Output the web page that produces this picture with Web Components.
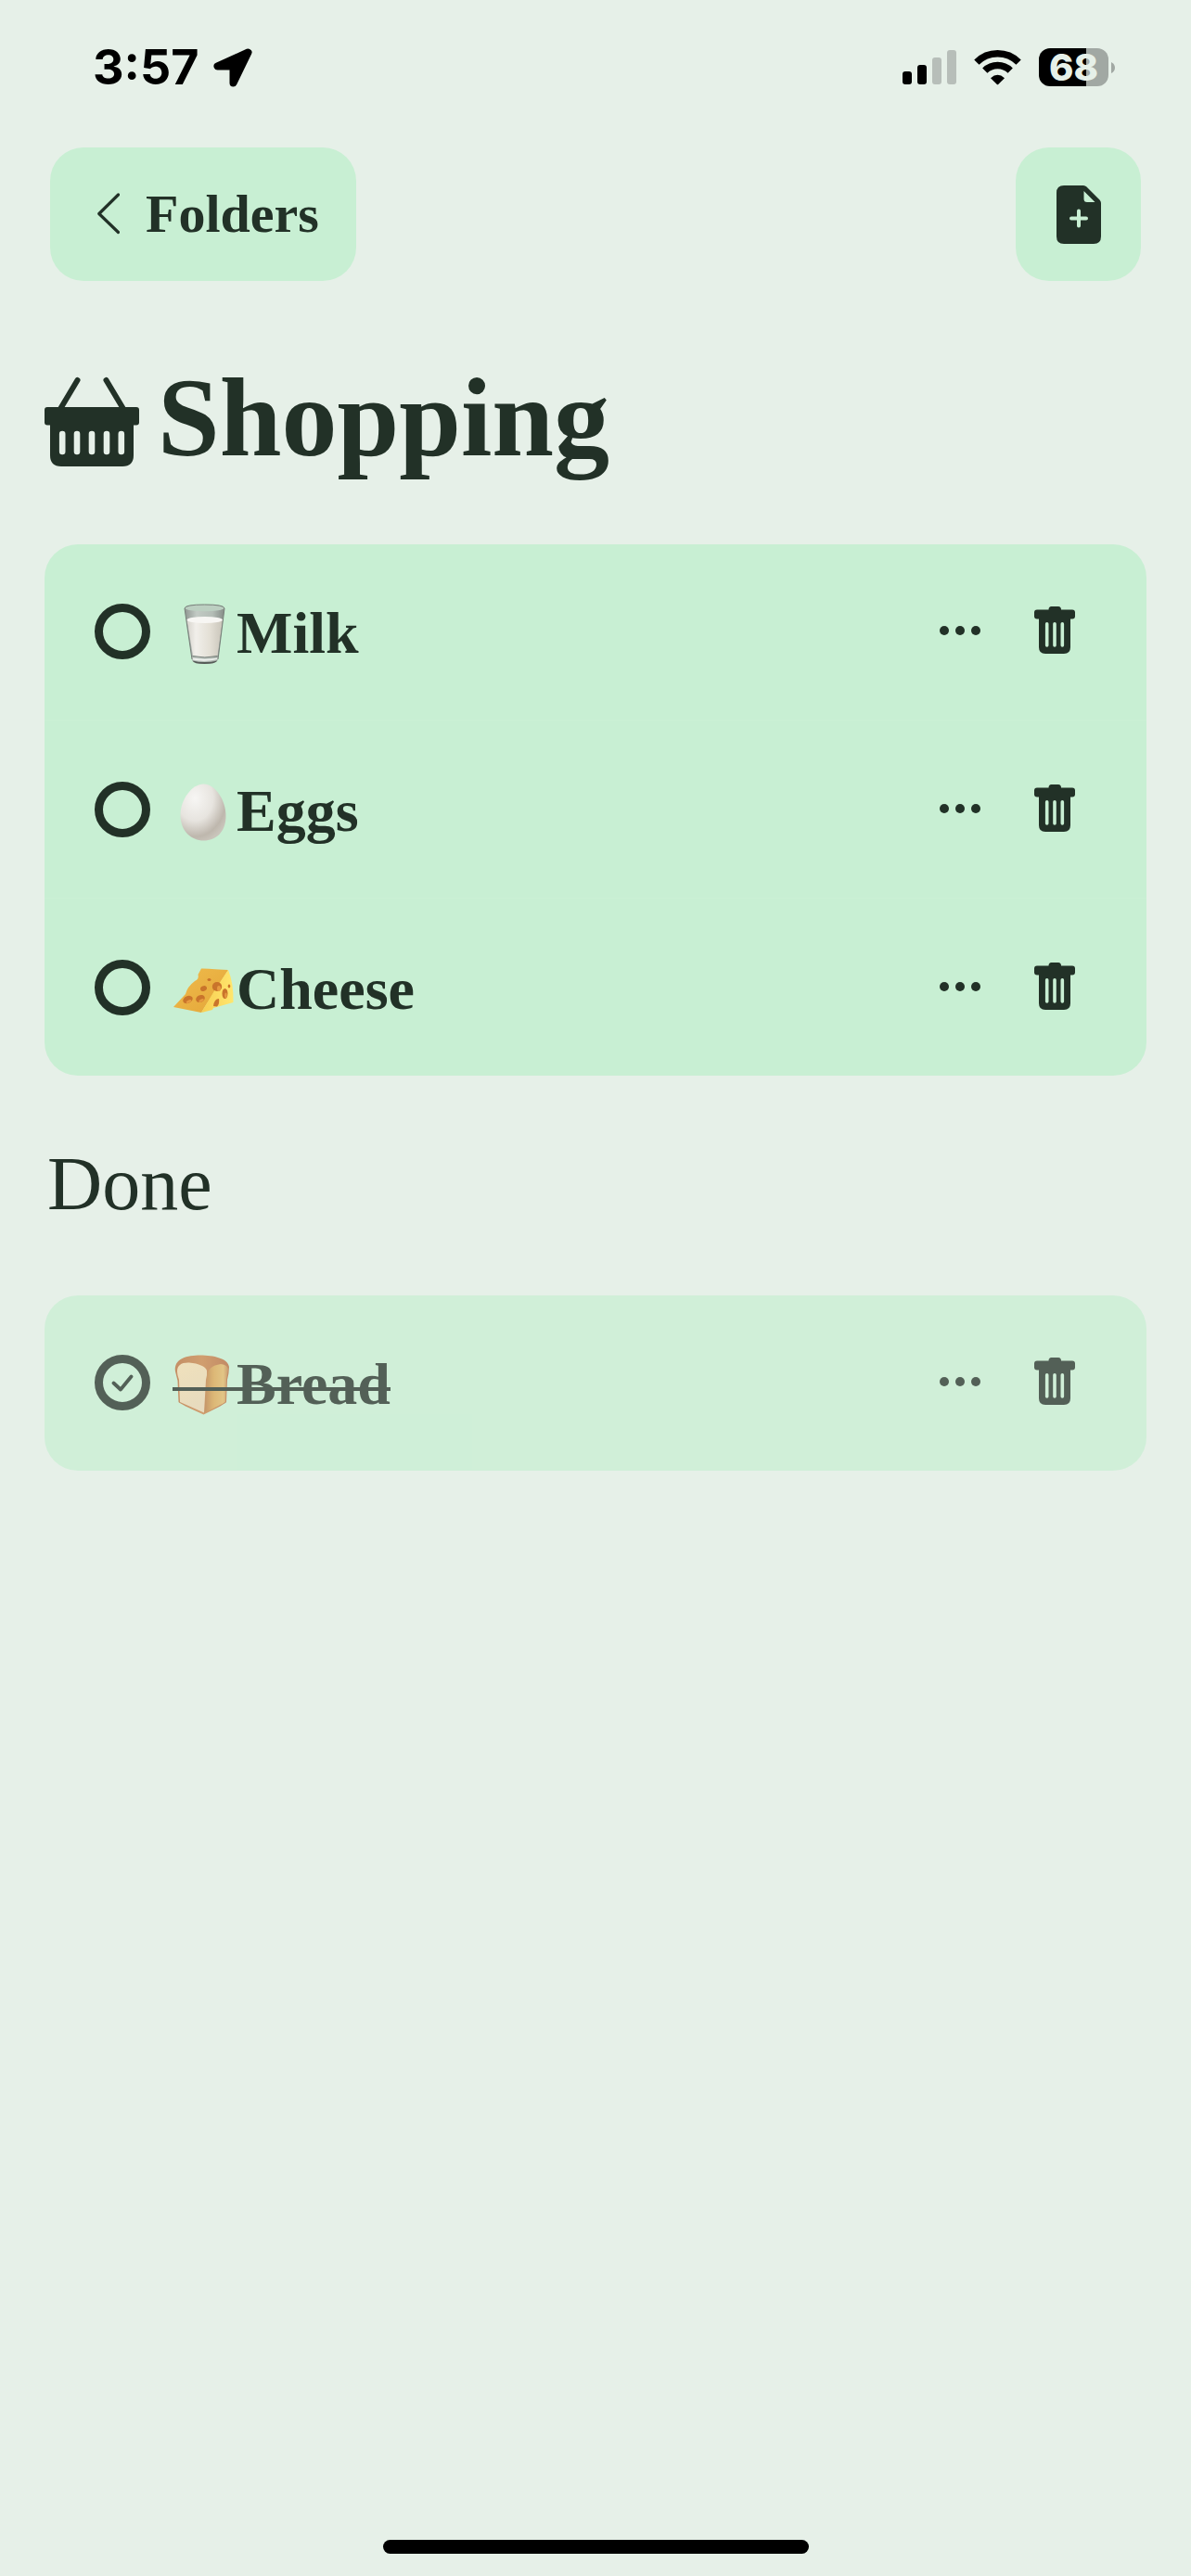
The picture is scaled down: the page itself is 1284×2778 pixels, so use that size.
<!DOCTYPE html>
<html lang="en">
<head>
<meta charset="utf-8">
<meta name="viewport" content="width=device-width, initial-scale=1">
<title>Shopping</title>
<style>
  html { background: #e6f0e8; }
  body {
    margin: 0;
    --page: #e6f0e8;
    --card: #c8efd3;
    --line: #cbf0d5;
    --ink: #223127;
    color: var(--ink);
    font-family: "Liberation Serif", "Times New Roman", serif;
  }
</style>
</head>
<body>
<app-screen>
  <status-bar slot="top" time="3:57" battery="68"></status-bar>
  <nav-bar slot="top" back="Folders"></nav-bar>
  <page-title>Shopping</page-title>
  <task-list>
    <task-item><food-icon slot="icon" name="milk"></food-icon>Milk</task-item>
    <task-item><food-icon slot="icon" name="egg"></food-icon>Eggs</task-item>
    <task-item><food-icon slot="icon" name="cheese"></food-icon>Cheese</task-item>
  </task-list>
  <section-title>Done</section-title>
  <task-list>
    <task-item done><food-icon slot="icon" name="bread"></food-icon>Bread</task-item>
  </task-list>
  <home-indicator slot="bottom"></home-indicator>
</app-screen>

<script>
const define = (name, render) => customElements.define(name, class extends HTMLElement {
  constructor() {
    super();
    this.attachShadow({ mode: "open" });
  }
  connectedCallback() {
    this.shadowRoot.innerHTML = render(this);
  }
});

define("app-screen", () => `
  <style>
    :host { display: flex; flex-direction: column; min-height: 100vh; background: var(--page); }
    main { flex: 1; padding: 0 48px; }
  </style>
  <slot name="top"></slot>
  <main><slot></slot></main>
  <slot name="bottom"></slot>`);

define("status-bar", el => `
  <style>
    :host {
      display: flex; justify-content: space-between; align-items: center;
      box-sizing: border-box; height: 145px; padding: 0 82px 0 100px;
      color: #000; font-family: Inter, "Liberation Sans", sans-serif;
    }
    div { display: flex; align-items: center; }
    .left { gap: 16px; }
    .right { gap: 19px; }
    time { font-size: 52px; font-weight: 700; line-height: 60px; }
    svg { display: block; }
    .battery { gap: 3px; }
    .level {
      justify-content: center; width: 75px; height: 41px; border-radius: 12px;
      background: linear-gradient(90deg, #000 ${el.getAttribute("battery")}%, #a1a8a3 0);
      color: var(--page); font-size: 40px; font-weight: 800; line-height: 41px;
    }
  </style>
  <div class="left">
    <time>${el.getAttribute("time")}</time>
    <svg width="42" height="42" viewBox="0 0 42 42" aria-hidden="true">
      <path d="M37.5 4.5 4.5 19.5H21.500V37.500Z" stroke="#000" stroke-width="8" stroke-linejoin="round"/>
    </svg>
  </div>
  <div class="right">
    <svg width="58" height="38" viewBox="0 0 58 38" aria-hidden="true">
      <rect y="23" width="10" height="14" rx="3"/>
      <rect x="16" y="16" width="10" height="21" rx="3"/>
      <g fill="#b7beb9"><rect x="32" y="8" width="10" height="29" rx="3"/><rect x="48" width="10" height="37" rx="3"/></g>
    </svg>
    <svg width="51" height="38" viewBox="0 0 51 38" aria-hidden="true">
      <g fill="none" stroke="#000" stroke-width="7.500">
        <path d="M2.900 13.100A32 32 0 0 1 48.100 13.100"/>
        <path d="M11.800 22.100A19.500 19.500 0 0 1 39.200 22.100"/>
      </g>
      <path d="M18 30.200Q25.500 23.500 33 30.200L26.200 37Q25.500 37.600 24.800 37Z"/>
    </svg>
    <div class="battery">
      <div class="level">${el.getAttribute("battery")}</div>
      <svg width="4" height="12" viewBox="0 0 4 12" aria-hidden="true"><path d="M0 0Q4 2 4 6T0 12Z" fill="#a1a8a3"/></svg>
    </div>
  </div>`);

define("nav-bar", el => `
  <style>
    :host { display: flex; justify-content: space-between; padding: 14px 54px 0; }
    a, button {
      display: flex; align-items: center; box-sizing: border-box; height: 144px;
      border: 0; border-radius: 36px; background: var(--card); color: inherit;
    }
    a { gap: 28px; padding: 0 40px 0 51px; font-size: 58px; font-weight: 700; line-height: 72px; text-decoration: none; }
    button { justify-content: center; width: 135px; padding: 0; }
    svg { display: block; }
  </style>
  <a href="#folders">
    <svg width="24" height="46" viewBox="0 0 24 46" aria-hidden="true">
      <path d="M22.500 2 1.800 22.500 22.500 42.500" fill="none" stroke="currentColor" stroke-width="3.200" stroke-linecap="round" stroke-linejoin="round"/>
    </svg>
    <span>${el.getAttribute("back")}</span>
  </a>
  <button type="button" aria-label="New item">
    <svg width="48" height="63" viewBox="0 0 48 63" aria-hidden="true">
      <path fill="currentColor" fill-rule="evenodd" d="M8 0H29Q31 0 32.500 1.500L46.500 15.500Q48 17 48 19V55Q48 63 40 63H8Q0 63 0 55V8Q0 0 8 0ZM29.500 6V14.500Q29.500 18 33 18H41.500Z"/>
      <path d="M24 27.500V43.500M16 35.500H32" stroke="#c8efd3" stroke-width="4" stroke-linecap="round"/>
    </svg>
  </button>`);

define("page-title", () => `
  <style>
    :host { display: block; margin: 78px 0 66px; }
    h1 { display: flex; align-items: center; gap: 20px; margin: 0; font-size: 120px; font-weight: 700; line-height: 140px; }
    svg { flex: none; }
  </style>
  <h1>
    <svg width="102" height="104" viewBox="0 -8 102 104" aria-hidden="true">
      <path d="M35.500 3 17 34M66.500 3 85 34" fill="none" stroke="currentColor" stroke-width="6" stroke-linecap="round"/>
      <path fill="currentColor" fill-rule="evenodd" d="M3 32H99Q102 32 102 35V48.500Q102 51.500 99 51.500H96V84Q96 96 84 96H18Q6 96 6 84V51.500H3Q0 51.500 0 48.500V35Q0 32 3 32Z"/>
      <path d="M19.200 61V80M35 61V80M51 61V80M67 61V80M82.800 61V80" stroke="#e6f0e8" stroke-width="6.600" stroke-linecap="round"/>
    </svg>
    <span><slot></slot></span>
  </h1>`);

define("section-title", () => `
  <style>
    :host { display: block; margin: 71px 0 74px; padding: 0 3px; }
    h2 { margin: 0; font-size: 82px; font-weight: 400; line-height: 92px; }
  </style>
  <h2><slot></slot></h2>`);

define("task-list", () => `
  <style>
    :host { display: block; }
    div { display: flex; flex-direction: column; border-radius: 36px; overflow: hidden; }
    ::slotted(task-item:not(:first-child)) { border-top: 1px solid var(--line); padding-top: 2px; }
  </style>
  <div role="list"><slot></slot></div>`);

define("task-item", el => `
  <style>
    :host { display: block; background: var(--card); }
    :host([done]) { opacity: .75; }
    .row { display: flex; align-items: center; justify-content: space-between; box-sizing: border-box; height: 189px; padding: 0 55px 1px 54px; }
    label { display: flex; align-items: center; gap: 24px; }
    .tick { display: grid; place-items: center; }
    .tick > * { grid-area: 1 / 1; }
    input {
      appearance: none; box-sizing: border-box; width: 60px; height: 60px; margin: 0;
      border: 9px solid var(--ink); border-radius: 50%;
    }
    input:not(:checked) + svg { visibility: hidden; }
    .name {
      position: relative; display: flex; align-items: center; gap: 3px; padding-top: 3px;
      font-size: 64px; font-weight: 700; line-height: 72px;
    }
    :host([done]) .name::after {
      content: ""; position: absolute; left: 0; right: 0; top: 56%; height: 4px; background: var(--ink);
    }
    .actions { display: flex; gap: 14px; }
    button { display: flex; align-items: center; justify-content: center; width: 88px; height: 88px; padding: 0; border: 0; background: none; color: inherit; }
    svg { display: block; }
  </style>
  <div class="row" role="listitem">
    <label>
      <span class="tick">
        <input type="checkbox" ${el.hasAttribute("done") ? "checked" : ""}>
        <svg width="24" height="20" viewBox="0 0 24 20" aria-hidden="true"><path d="M2.500 10.500 10 17.500 21.500 3.500" fill="none" stroke="currentColor" stroke-width="3.800" stroke-linecap="round" stroke-linejoin="round"/></svg>
      </span>
      <span class="name"><slot name="icon"></slot><span><slot></slot></span></span>
    </label>
    <div class="actions">
      <button type="button" aria-label="More">
        <svg width="44" height="12" viewBox="0 0 44 12" fill="currentColor" aria-hidden="true"><circle cx="5" cy="5" r="5"/><circle cx="22" cy="5" r="5"/><circle cx="39" cy="5" r="5"/></svg>
      </button>
      <button type="button" aria-label="Delete">
        <svg width="44" height="54" viewBox="0 0 44 54" aria-hidden="true">
          <path fill="currentColor" d="M18.500 0H26Q29 0 29 3.500H41Q44 3.500 44 6.500V10.500Q44 13.500 41 13.500H39V44Q39 51 32 51H12Q5 51 5 44V13.500H3Q0 13.500 0 10.500V6.500Q0 3.500 3 3.500H15.500Q15.500 0 18.500 0Z"/>
          <path d="M13.700 18.800V42M22 18.800V42M30.300 18.800V42" stroke="#c8efd3" stroke-width="3.600" stroke-linecap="round"/>
        </svg>
      </button>
    </div>
  </div>`);

const foods = {
  milk: `
    <defs>
      <linearGradient id="m"><stop offset="0" stop-color="#d6d3cc"/><stop offset=".25" stop-color="#f1efea"/><stop offset=".65" stop-color="#e3dfd5"/><stop offset="1" stop-color="#c9c5ba"/></linearGradient>
      <linearGradient id="g"><stop offset="0" stop-color="#8e9590"/><stop offset=".3" stop-color="#c2cac4"/><stop offset=".7" stop-color="#b4bdb6"/><stop offset="1" stop-color="#858c87"/></linearGradient>
    </defs>
    <path d="M13 6Q13.500 2 34.500 2T56 6L49 61Q48 66 34.500 66T21 61Z" fill="url(#g)"/>
    <ellipse cx="34.500" cy="5.800" rx="21" ry="3.500" fill="#bccfc1"/>
    <path d="M15.500 18.500 54 18.500 48.500 57Q34.500 60 22 57Z" fill="url(#m)"/>
    <ellipse cx="34.700" cy="18.500" rx="19.300" ry="3.500" fill="#f7f6f3"/>
    <path d="M21.500 59.500Q34.500 62 48.500 59.500V61Q34.500 64 22 61.500Z" fill="#f1f3f0"/>
    <path d="M21.500 62.500Q34.500 65.500 48.500 62.500Q46 66 34.500 66T21.500 62.500Z" fill="#555b57"/>
    <path d="M13 6Q13.500 2 34.500 2T56 6L49 61M13 6 21 61M21.500 57.500Q34.500 60.500 48.500 57.500" fill="none" stroke="#777e79" stroke-width="1"/>`,
  egg: `
    <defs><radialGradient id="e" cx=".32" cy=".25" r=".8"><stop offset="0" stop-color="#f7f6f4"/><stop offset=".5" stop-color="#e7e4df"/><stop offset=".85" stop-color="#beb7ad"/><stop offset="1" stop-color="#c9c4bb"/></radialGradient></defs>
    <path d="M33.500 3.500C46 3.500 57.500 21 57.500 38C57.500 55 47 64.500 33.500 64.500S8.500 54 8.500 37C8.500 20 21 3.500 33.500 3.500Z" fill="url(#e)"/>`,
  cheese: `
    <defs>
      <linearGradient id="t" x2="1" y2="1"><stop offset="0" stop-color="#efbb4c"/><stop offset="1" stop-color="#e4a638"/></linearGradient>
      <linearGradient id="s"><stop offset="0" stop-color="#f7ce50"/><stop offset="1" stop-color="#ffe66e"/></linearGradient>
    </defs>
    <g transform="translate(0 2)">
    <path d="M31 8.500Q33 8 60 10L46 32 31 56 1 50 14 36Q16 28 24 22 29 20 27.500 15Z" fill="url(#t)"/>
    <path d="M60 10Q66 24 65.500 45L44 51 43 53 31 56 46 31Z" fill="url(#s)"/>
    <g fill="#c9742b">
      <ellipse cx="16.500" cy="42" rx="5.500" ry="3.800" transform="rotate(-24 16.500 42)"/><ellipse cx="30" cy="41" rx="5" ry="3.800" transform="rotate(-24 30 41)"/>
      <ellipse cx="33.500" cy="30" rx="3.600" ry="2.800" transform="rotate(-24 33.500 30)"/><ellipse cx="39.500" cy="20.500" rx="2" ry="1.500"/>
      <ellipse cx="48" cy="28" rx="5.200" ry="5"/><ellipse cx="56.500" cy="35.500" rx="3" ry="5.500"/><ellipse cx="61" cy="27.500" rx="1.300" ry="2"/>
      <path d="M44 49Q45 41 50 41Q51 46 48 49.500Z"/>
    </g>
    <g fill="#e79b40"><ellipse cx="17.500" cy="44" rx="3" ry="1.500" transform="rotate(-24 17.500 44)"/><ellipse cx="31" cy="43" rx="3" ry="1.500" transform="rotate(-24 31 43)"/><ellipse cx="50" cy="30" rx="2" ry="3"/><ellipse cx="57.500" cy="37.500" rx="1.200" ry="3"/></g>
    </g>`,
  bread: `
    <defs>
      <linearGradient id="c"><stop offset="0" stop-color="#b9703b"/><stop offset=".5" stop-color="#c98347"/><stop offset="1" stop-color="#b5693a"/></linearGradient>
      <linearGradient id="r"><stop offset="0" stop-color="#b9763d"/><stop offset=".4" stop-color="#d9a550"/><stop offset=".8" stop-color="#e0b766"/><stop offset="1" stop-color="#c08048"/></linearGradient>
      <linearGradient id="f" x2=".3" y2="1"><stop offset="0" stop-color="#f2dcae"/><stop offset="1" stop-color="#e8d5b0"/></linearGradient>
    </defs>
    <path d="M3 19C1 5 16 1.500 30 1.500S60 5 61 14Q61 20 59 28L58 52Q57 54 33.500 65.500 8 54 6.500 52L5.500 29Z" fill="url(#c)"/>
    <path d="M37 24Q38 13 52 11 60 12 60 17L58 28 57 52Q52 55 34 64Z" fill="url(#r)"/>
    <path d="M5 19Q5 9 18 9.500 34 11 37 18 37.500 22 36 28L34 63.500 8 52 7 28Q5 23 5 19Z" fill="url(#f)"/>`
};

define("food-icon", el => `
  <style>
    :host { display: block; flex: none; }
    svg { display: block; }
  </style>
  <svg width="66" height="66" viewBox="0 0 66 66" role="img" aria-label="${el.getAttribute("name")}">${foods[el.getAttribute("name")]}</svg>`);

define("home-indicator", () => `
  <style>
    :host { display: flex; justify-content: center; padding: 24px 0; }
    div { width: 459px; max-width: 60%; height: 15px; border-radius: 8px; background: #000; }
  </style>
  <div></div>`);
</script>
</body>
</html>
